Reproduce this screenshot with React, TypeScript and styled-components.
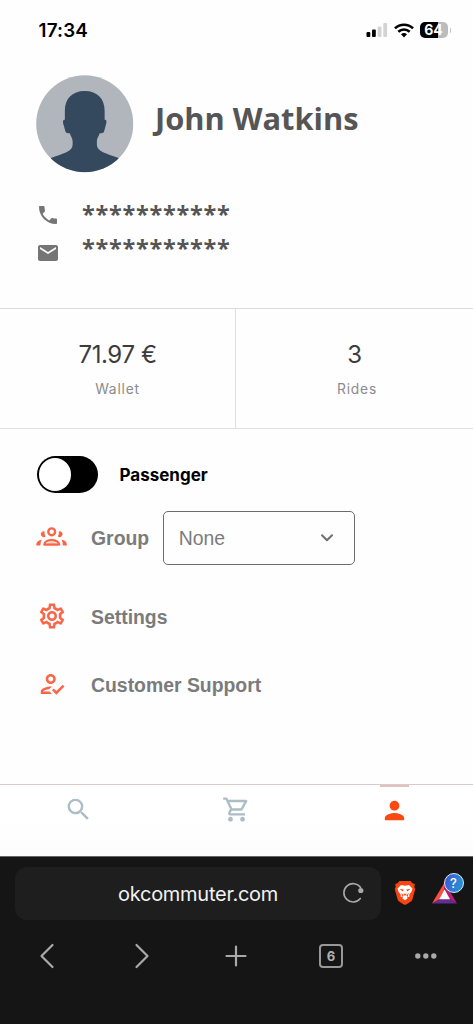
import React from 'react';
import styled, { createGlobalStyle } from 'styled-components';
import {
  MdPhone,
  MdEmail,
  MdOutlineSettings,
  MdOutlineHowToReg,
  MdSearch,
  MdOutlineShoppingCart,
  MdPerson,
} from 'react-icons/md';

const GlobalStyle = createGlobalStyle`
  * { box-sizing: border-box; }
  body {
    margin: 0;
    background: #fefefe;
    font-family: Inter, "Liberation Sans", sans-serif;
  }
  svg { display: block; flex: none; }
`;

const Screen = styled.div`
  width: 473px;
  height: 1024px;
  display: flex;
  flex-direction: column;
  overflow: hidden;
`;

const StatusBar = styled.header`
  height: 60px;
  flex: none;
  display: flex;
  justify-content: space-between;
  align-items: center;
  padding: 0 22px 0 38.5px;
`;

const Clock = styled.span`
  padding-top: 2px;
  font-size: 18.8px;
  font-weight: 600;
  line-height: 24px;
  letter-spacing: 0.2px;
  color: #000;
`;

const StatusIcons = styled.div`
  display: flex;
  align-items: center;
  gap: 6px;
`;

const Battery = styled.div`
  display: flex;
  align-items: center;
  gap: 2px;
`;

const BatteryBody = styled.div`
  width: 28px;
  height: 16px;
  border-radius: 5px;
  background: linear-gradient(90deg, #000 64%, #bcbcbc 64%);
  color: #fff;
  font-size: 14px;
  font-weight: 700;
  line-height: 16px;
  text-align: center;
`;

const BatteryTip = styled.i`
  width: 1.5px;
  height: 5px;
  border-radius: 0 2px 2px 0;
  background: #c4c4c4;
`;

const Profile = styled.section`
  height: 113px;
  flex: none;
  display: flex;
  padding: 15px 0 0 36px;
  gap: 21.5px;
`;

const Name = styled.h1`
  margin: 23px 0 0;
  font: 700 30.8px/40px "Open Sans", "Noto Sans", sans-serif;
  color: #555;
`;

const Contacts = styled.section`
  height: 135px;
  flex: none;
  padding: 24px 0 0 36px;
`;

const Contact = styled.div<{ $iconTop: number }>`
  height: 34px;
  display: flex;
  gap: 22px;
  color: #757575;
  svg { margin-top: ${(p) => p.$iconTop}px; }
`;

const Masked = styled.span`
  font: 700 23.4px/34px "Open Sans", "Noto Sans", sans-serif;
  letter-spacing: 0.75px;
  color: #555;
`;

const Stats = styled.section`
  height: 121px;
  flex: none;
  display: flex;
  border-top: 1px solid #dcdcdc;
  border-bottom: 1px solid #e0e0e0;
`;

const Stat = styled.div<{ $divided?: boolean }>`
  width: ${(p) => (p.$divided ? 236 : 237)}px;
  border-right: ${(p) => (p.$divided ? '1px solid #dfdfdf' : 'none')};
  display: flex;
  flex-direction: column;
  align-items: center;
  padding-top: 31px;
`;

const StatValue = styled.strong`
  font-size: 24px;
  font-weight: 400;
  line-height: 30px;
  letter-spacing: -0.4px;
  color: #3c3c3c;
`;

const StatLabel = styled.span<{ $indent?: number }>`
  margin-top: 9px;
  padding-left: ${(p) => p.$indent ?? 0}px;
  font-size: 13.8px;
  line-height: 20px;
  letter-spacing: 0.8px;
  color: #8b8b8b;
`;

const Options = styled.main`
  height: 355px;
  flex: none;
  padding: 27px 0 0 36px;
`;

const SwitchRow = styled.label`
  height: 37px;
  display: flex;
  align-items: center;
  gap: 22px;
`;

const Track = styled.span`
  width: 61px;
  height: 37px;
  margin-left: 0.5px;
  padding: 2px;
  border-radius: 19px;
  background: #000;
`;

const Knob = styled.span`
  display: block;
  width: 32.5px;
  height: 33px;
  border-radius: 50%;
  background: #fff;
`;

const SwitchLabel = styled.span`
  font-size: 17px;
  font-weight: 650;
  line-height: 24px;
  color: #000;
`;

const OptionRow = styled.div<{ $height: number; $top?: number }>`
  height: ${(p) => p.$height}px;
  margin-top: ${(p) => p.$top ?? 0}px;
  display: flex;
  align-items: center;
`;

const OptionIcon = styled.span`
  width: 31px;
  padding-bottom: 2px;
  display: flex;
  justify-content: center;
  color: #f96547;
`;

const OptionLabel = styled.span`
  margin-left: 24px;
  font: 700 19.4px/24px "Liberation Sans", Arial, sans-serif;
  color: #7b7b7b;
`;

const Select = styled.div`
  width: 192.5px;
  height: 54px;
  margin-left: 13.5px;
  padding: 0 20.5px 0 15px;
  border: 1px solid #6c6c6c;
  border-radius: 5px;
  display: flex;
  align-items: center;
  justify-content: space-between;
  font: 400 19.4px/24px "Liberation Sans", Arial, sans-serif;
  color: #7b7b7b;
`;

const TabBar = styled.nav`
  height: 72px;
  flex: none;
  display: grid;
  grid-template-columns: 157px 158px 158px;
  justify-items: center;
  border-top: 1px solid #dccaca;
  background: linear-gradient(#fff 50%, #fcfcfc);
`;

const Tab = styled.div<{ $active?: boolean }>`
  width: 29px;
  display: flex;
  justify-content: center;
  padding-top: ${(p) => (p.$active ? 9 : 9.5)}px;
  border-top: ${(p) => (p.$active ? '2px solid #dfc3c1' : 'none')};
  color: ${(p) => (p.$active ? '#fa4a12' : '#adbdc7')};
  height: 50px;
`;

const Browser = styled.footer`
  height: 168px;
  flex: none;
  background: #151515;
  border-top: 1px solid #666;
  padding-top: 10px;
`;

const AddressRow = styled.div`
  height: 53px;
  display: flex;
  padding-left: 15px;
`;

const AddressBar = styled.div`
  width: 365.5px;
  height: 53px;
  border-radius: 12px;
  background: #1e1e1e;
  display: flex;
  align-items: center;
  justify-content: space-between;
  padding: 0 16.5px 2px 103px;
`;

const Address = styled.span`
  padding-top: 2px;
  font-size: 20px;
  line-height: 26px;
  letter-spacing: -0.27px;
  color: #f2f2f2;
`;

const Extensions = styled.div`
  display: flex;
  gap: 16px;
  padding: 6px 0 0 13.5px;
`;

const Toolbar = styled.div`
  height: 72px;
  display: grid;
  grid-template-columns: repeat(5, 94.6px);
  place-items: center;
`;

const TabCount = styled.span`
  width: 24px;
  height: 24px;
  border: 2px solid #989898;
  border-radius: 4px;
  color: #b0b0b0;
  font-size: 13px;
  font-weight: 700;
  line-height: 20px;
  text-align: center;
`;

const Signal = () => (
  <svg width="22" height="14" viewBox="0 0 22 14">
    <rect x="0.5" y="9" width="3.8" height="5" rx="1" fill="#000" />
    <rect x="6" y="6.5" width="3.8" height="7.5" rx="1" fill="#000" />
    <rect x="11.7" y="3.5" width="3.8" height="10.5" rx="1" fill="#d3d3d3" />
    <rect x="17.3" y="0" width="3.8" height="14" rx="1" fill="#d3d3d3" />
  </svg>
);

const Wifi = () => (
  <svg width="20" height="15" viewBox="0 0 20 15" fill="none" stroke="#000" strokeWidth="2.6">
    <path d="M1 5.4C6 .5 14 .5 19 5.4" />
    <path d="M4.3 8.8C7.6 5.7 12.4 5.7 15.7 8.8" />
    <path d="M7 11.2Q10 8.8 13 11.2L10 14.4Z" fill="#000" stroke="none" />
  </svg>
);

const Avatar = () => (
  <svg width="97.5" height="97.5" viewBox="0 0 98 98">
    <defs>
      <clipPath id="avatar-circle">
        <circle cx="49" cy="49" r="48.8" />
      </clipPath>
    </defs>
    <g clipPath="url(#avatar-circle)">
      <rect width="98" height="98" fill="#b1b6bd" />
      <path
        fill="#34495e"
        d="M49 16C36 16 29 24 29 36V45C26.500 44.500 27 48 28 51L29.500 56.500C30 58.500 32 58.500 34 58.500C35 62 36.800 63 36.800 67V70C36.800 77 26 79 15 83.500V98H83V83.500C72 79 61.200 77 61.200 70V67C61.200 63 63 62 64 58.500C66 58.500 68 58.500 68.500 56.500L70 51C71 48 71.500 44.500 69 45V36C69 24 62 16 49 16Z"
      />
    </g>
  </svg>
);

const Group = () => (
  <svg width="31" height="20" viewBox="0 0 31 20" fill="currentColor">
    <circle cx="15.700" cy="4.800" r="3.400" fill="none" stroke="currentColor" strokeWidth="2.400" />
    <path d="M8.600 4.500A2.900 2.900 0 1 0 9.600 9.500Q8 7 8.600 4.500Z" />
    <path d="M22.800 4.500A2.900 2.900 0 1 1 21.800 9.500Q23.400 7 22.800 4.500Z" />
    <path d="M8.300 17.600C8.300 11.500 23.100 11.500 23.100 17.600Z" fill="none" stroke="currentColor" strokeWidth="2.300" strokeLinejoin="round" />
    <path d="M10 17.500C12 14.300 19.400 14.300 21.400 17.500Z" opacity="0.350" />
    <path d="M.3 18.600C.1 15.500 2 13.200 5.700 12.800Q4.400 15 4.400 18.600Z" />
    <path d="M30.900 18.600C31.100 15.500 29.300 13.200 25.600 12.800Q26.900 15 26.900 18.600Z" />
  </svg>
);

const Chevron = () => (
  <svg width="14" height="10" viewBox="0 0 14 10" fill="none" stroke="#6f6f6f" strokeWidth="2" strokeLinecap="round" strokeLinejoin="round">
    <path d="M2 2.300L7 7.300L12 2.300" />
  </svg>
);

const Reload = () => (
  <svg width="22" height="22" viewBox="0 0 22 22" fill="none" stroke="#a9a9a9" strokeWidth="1.600">
    <path d="M18.300 16.500A9.200 9.200 0 1 1 18.600 5.500" strokeLinecap="round" />
    <circle cx="18.800" cy="8.500" r="2.600" fill="#a9a9a9" stroke="none" />
  </svg>
);

const Lion = () => (
  <svg width="22" height="40" viewBox="0 0 22 40">
    <path d="M5.500 8H16.500L18.500 10.200L20.800 11L20.300 14L21.300 16L18.200 27Q17.600 28.500 11 32Q4.400 28.500 3.800 27L.7 16L1.700 14L1.200 11L3.500 10.200Z" fill="#f9440f" />
    <path d="M7 12L11 12.700L15 12L18.500 15.500L17.500 18.700L15.300 21.500L15.300 24L13 23.500L13.500 25.500L11 27.300L8.500 25.500L9 23.500L6.700 24L6.700 21.500L4.500 18.700L3.500 15.500Z" fill="#fff" />
    <path d="M5.300 15.800L9.500 16.500L8.900 18.500Z M16.700 15.800L12.500 16.500L13.100 18.500Z M9.200 20.800H12.800L11 23Z M7.200 19.800L9.700 22.500L8.200 23.500Z M14.800 19.800L12.300 22.500L13.800 23.500Z" fill="#f9440f" />
  </svg>
);

const RewardsWrap = styled.div`
  position: relative;
  width: 34px;
  height: 40px;
`;

const RewardsBadge = styled.span`
  position: absolute;
  left: 11.5px;
  top: -0.5px;
  width: 20px;
  height: 20px;
  border: 1.2px solid #e2ecfa;
  border-radius: 50%;
  background: linear-gradient(110deg, #4553d2, #278bd5 75%);
  color: #fff;
  font-size: 13px;
  font-weight: 500;
  line-height: 18px;
  text-align: center;
`;

const Rewards = () => (
  <RewardsWrap>
    <svg width="26" height="40" viewBox="0 0 26 40">
      <path d="M12.500 9.500L0 30.500L8 26L12.500 18Z" fill="#fa4f3d" />
      <path d="M12.500 9.500L25 30.500L17.500 26L12.500 18Z" fill="#b32178" />
      <path d="M0 30.500L8 26H17.500L25 30.500Z" fill="#662d91" />
      <path d="M12.600 16.500L7.200 26.200H18Z" fill="#fff" />
    </svg>
    <RewardsBadge>?</RewardsBadge>
  </RewardsWrap>
);

const ToolIcon = ({ d }: { d: string }) => (
  <svg width="26" height="26" viewBox="0 0 26 26" fill="none" stroke="#a9a9a9" strokeWidth="2.200" strokeLinecap="round" strokeLinejoin="round">
    <path d={d} />
  </svg>
);

const More = () => (
  <svg width="24" height="8" viewBox="0 0 24 8" fill="#a9a9a9">
    <circle cx="3.800" cy="4" r="2.700" />
    <circle cx="11.800" cy="4" r="2.700" />
    <circle cx="19.800" cy="4" r="2.700" />
  </svg>
);

export default function App() {
  return (
    <Screen>
      <GlobalStyle />
      <StatusBar>
        <Clock>17:34</Clock>
        <StatusIcons>
          <Signal />
          <Wifi />
          <Battery>
            <BatteryBody>64</BatteryBody>
            <BatteryTip />
          </Battery>
        </StatusIcons>
      </StatusBar>

      <Profile>
        <Avatar />
        <Name>John Watkins</Name>
      </Profile>

      <Contacts>
        <Contact $iconTop={6}>
          <MdPhone size={24} />
          <Masked>***********</Masked>
        </Contact>
        <Contact $iconTop={10}>
          <MdEmail size={24} />
          <Masked>***********</Masked>
        </Contact>
      </Contacts>

      <Stats>
        <Stat $divided>
          <StatValue>71.97 €</StatValue>
          <StatLabel>Wallet</StatLabel>
        </Stat>
        <Stat>
          <StatValue>3</StatValue>
          <StatLabel $indent={5}>Rides</StatLabel>
        </Stat>
      </Stats>

      <Options>
        <SwitchRow>
          <Track>
            <Knob />
          </Track>
          <SwitchLabel>Passenger</SwitchLabel>
        </SwitchRow>
        <OptionRow $height={54} $top={18}>
          <OptionIcon><Group /></OptionIcon>
          <OptionLabel>Group</OptionLabel>
          <Select>
            None
            <Chevron />
          </Select>
        </OptionRow>
        <OptionRow $height={34} $top={35}>
          <OptionIcon><MdOutlineSettings size={30} /></OptionIcon>
          <OptionLabel>Settings</OptionLabel>
        </OptionRow>
        <OptionRow $height={34} $top={34}>
          <OptionIcon><MdOutlineHowToReg size={30} /></OptionIcon>
          <OptionLabel>Customer Support</OptionLabel>
        </OptionRow>
      </Options>

      <TabBar>
        <Tab><MdSearch size={29} /></Tab>
        <Tab><MdOutlineShoppingCart size={29} /></Tab>
        <Tab $active><MdPerson size={29} /></Tab>
      </TabBar>

      <Browser>
        <AddressRow>
          <AddressBar>
            <Address>okcommuter.com</Address>
            <Reload />
          </AddressBar>
          <Extensions>
            <Lion />
            <Rewards />
          </Extensions>
        </AddressRow>
        <Toolbar>
          <ToolIcon d="M18.500 2L7.500 13L18.500 24" />
          <ToolIcon d="M7.500 2L18.500 13L7.500 24" />
          <ToolIcon d="M3.500 13H22.500M13 3.500V22.500" />
          <TabCount>6</TabCount>
          <More />
        </Toolbar>
      </Browser>
    </Screen>
  );
}
